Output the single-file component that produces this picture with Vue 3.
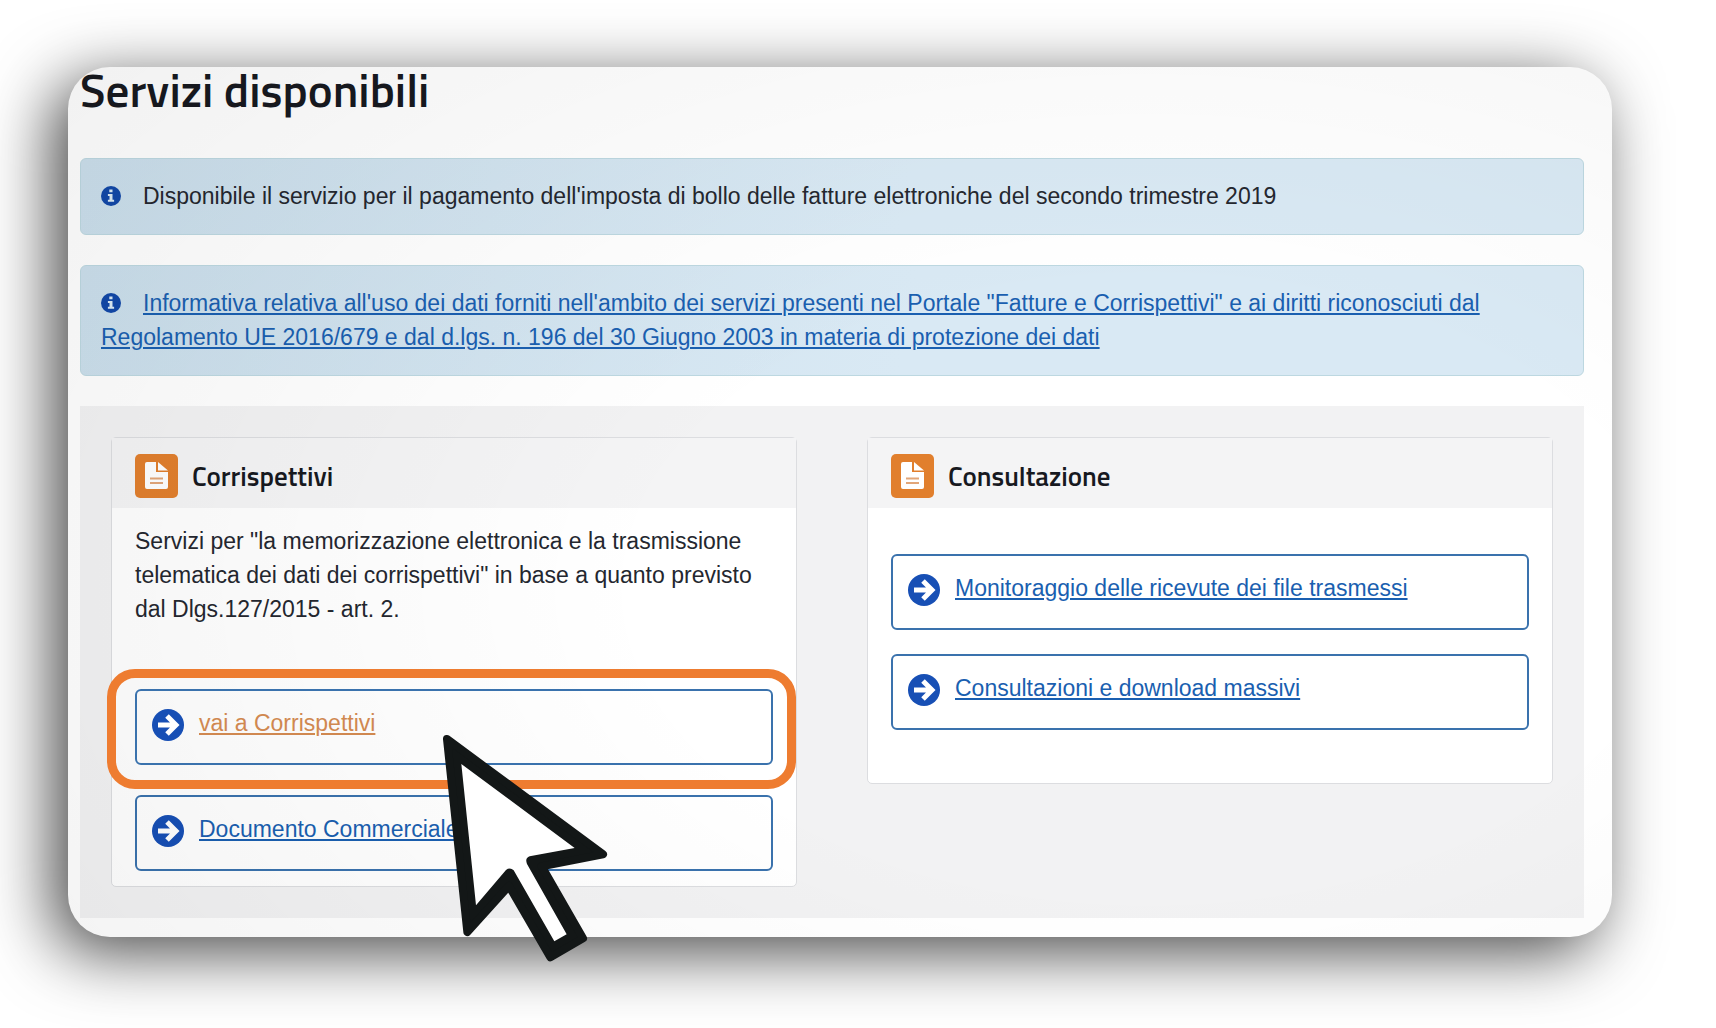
<script setup>
import { ref } from "vue";

const notices = ref([
  {
    id: 1,
    text: "Disponibile il servizio per il pagamento dell'imposta di bollo delle fatture elettroniche del secondo trimestre 2019",
  },
  {
    id: 2,
    href: "#informativa",
    text: "Informativa relativa all'uso dei dati forniti nell'ambito dei servizi presenti nel Portale \"Fatture e Corrispettivi\" e ai diritti riconosciuti dal Regolamento UE 2016/679 e dal d.lgs. n. 196 del 30 Giugno 2003 in materia di protezione dei dati",
  },
]);

const cards = ref([
  {
    id: "corrispettivi",
    title: "Corrispettivi",
    description:
      'Servizi per "la memorizzazione elettronica e la trasmissione telematica dei dati dei corrispettivi" in base a quanto previsto dal Dlgs.127/2015 - art. 2.',
    links: [
      { label: "vai a Corrispettivi", href: "#corrispettivi", active: true },
      { label: "Documento Commerciale", href: "#documento" },
    ],
  },
  {
    id: "consultazione",
    title: "Consultazione",
    links: [
      { label: "Monitoraggio delle ricevute dei file trasmessi", href: "#monitoraggio" },
      { label: "Consultazioni e download massivi", href: "#download" },
    ],
  },
]);
</script>

<template>
  <main class="panel">
    <h1>Servizi disponibili</h1>

    <p v-for="notice in notices" :key="notice.id" class="notice">
      <svg class="icon-info" viewBox="0 0 20 20" aria-hidden="true">
        <circle cx="10" cy="10" r="10" fill="#1248a8" />
        <path
          d="M8.3 3.4h3.2v2.8H8.3zM6.9 8h4.6v5.8h1.6v2H6.9v-2h1.6V10H6.9z"
          fill="#dcebf5"
        />
      </svg>
      <a v-if="notice.href" :href="notice.href">{{ notice.text }}</a>
      <template v-else>{{ notice.text }}</template>
    </p>

    <section class="services">
      <article v-for="card in cards" :key="card.id" class="card" :class="card.id">
        <header class="card-header">
          <svg class="icon-file" viewBox="0 0 43 44" aria-hidden="true">
            <rect width="43" height="44" rx="5" fill="#e17f2d" />
            <path d="M10 10q0-2 2-2h9v10h12v15q0 2-2 2H12q-2 0-2-2z" fill="#fff" />
            <path d="M23 8l10 8.500H23z" fill="#fff" />
            <path d="M15 24.500h13M15 29h13" stroke="#e2a679" stroke-width="2" />
          </svg>
          <h2>{{ card.title }}</h2>
        </header>
        <div class="card-body">
          <p v-if="card.description" class="description">{{ card.description }}</p>
          <ul class="links">
            <li v-for="link in card.links" :key="link.label" :class="{ active: link.active }">
              <svg class="icon-arrow" viewBox="0 0 32 32" aria-hidden="true">
                <circle cx="16" cy="16" r="16" fill="#174fb5" />
                <path
                  d="M6 16h17M15 7l9 9-9 9"
                  fill="none"
                  stroke="#fff"
                  stroke-width="5"
                />
              </svg>
              <a :href="link.href">{{ link.label }}</a>
              <template v-if="link.active">
                <span class="ring"></span>
                <svg class="cursor" viewBox="120 249 510 690" aria-hidden="true">
                  <path
                    d="M141 270L609 616L425 652L549 868L451 925L327 711L202 849Z"
                    fill="#131717"
                    stroke="#131717"
                    stroke-width="24"
                    stroke-linejoin="round"
                  />
                  <path
                    d="M184 345L524 597L389 622Q374 627 381 645L500 856L463 877L341 664Q330 654 318 663L228 769Z"
                    fill="#fff"
                  />
                </svg>
              </template>
            </li>
          </ul>
        </div>
      </article>
    </section>
  </main>
</template>

<style>
body {
  margin: 0;
  background: #fff;
}
</style>

<style scoped>
.panel {
  position: relative;
  box-sizing: border-box;
  margin: 67px 104px 91px 68px;
  padding: 0 28px 19px 12px;
  border-radius: 42px;
  background: #fff;
  box-shadow: -15px 15px 66px rgba(0, 0, 0, 0.72);
  color: #24272f;
  font-family: "Liberation Sans", Arial, sans-serif;
  font-size: 23px;
  line-height: 34px;
  display: flow-root;
}

/* soft vignette over the whole panel */
.panel::after {
  content: "";
  position: absolute;
  inset: 0;
  border-radius: inherit;
  background: radial-gradient(
    ellipse 80% 85% at 70% 60%,
    rgba(0, 0, 0, 0) 40%,
    rgba(0, 0, 0, 0.05) 110%
  );
  pointer-events: none;
}

h1,
h2 {
  margin: 0;
  color: #17191f;
  font-family: "Titillium Web", Roboto, sans-serif;
  font-weight: 600;
}

h1 {
  margin-bottom: 45px;
  font-size: 47px;
  line-height: 46px;
}

h2 {
  font-size: 27px;
  line-height: 40px;
}

.notice {
  margin: 0 0 30px;
  padding: 20px 20px 21px;
  border: 1px solid #bdd8e1;
  border-radius: 6px;
  background: linear-gradient(100deg, #cbdfec, #d9e9f4 55%, #d9e9f4);
}

.icon-info {
  width: 20px;
  height: 20px;
  margin-right: 22px;
  vertical-align: -2px;
}

a {
  color: #1a5fb0;
  text-decoration: underline;
  text-decoration-thickness: 2px;
  text-underline-offset: 2px;
}

.services {
  display: grid;
  grid-template-columns: 1fr 1fr;
  align-items: start;
  gap: 70px;
  padding: 31px;
  background: #f2f2f3;
}

.card {
  border: 1px solid #dcdde0;
  border-radius: 5px;
  background: #fff;
}

.card-header {
  display: flex;
  align-items: center;
  gap: 14px;
  box-sizing: border-box;
  height: 70px;
  padding: 6px 23px 0;
  background: #f4f4f5;
}

.icon-file {
  width: 43px;
  height: 44px;
}

.card-body {
  padding: 16px 23px 15px;
}

.description {
  margin: 0 0 63px;
}

.links {
  display: grid;
  gap: 30px;
  margin: 0;
  padding: 0;
  list-style: none;
}

.links li {
  position: relative;
  display: flex;
  gap: 15px;
  padding: 15px 15px 22px;
  border: 2px solid #3a72ad;
  border-radius: 6px;
}

.icon-arrow {
  width: 32px;
  height: 32px;
  margin-top: 3px;
}

.links .active {
  z-index: 1;
}

.active a {
  color: #d08850;
}

.consultazione .card-body {
  padding: 46px 23px 53px;
}

.consultazione .links {
  gap: 24px;
}

.ring {
  position: absolute;
  inset: -22px -25px -26px -30px;
  border: 9px solid #ee7c30;
  border-radius: 28px;
}

.cursor {
  position: absolute;
  top: 41px;
  left: 303px;
  width: 170px;
  height: 230px;
}
</style>
